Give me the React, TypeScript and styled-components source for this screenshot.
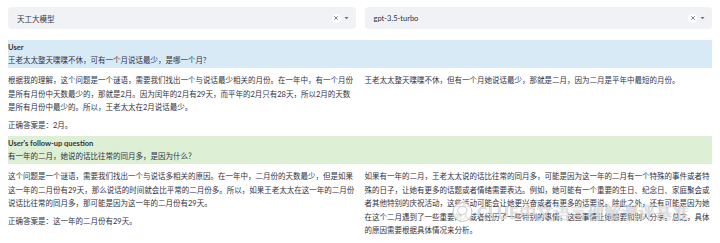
import styled, { createGlobalStyle } from "styled-components";
import { X } from "lucide-react";

const GlobalStyle = createGlobalStyle`
  * { box-sizing: border-box; }
  body {
    margin: 0;
    background: #ffffff;
    color: #31333f;
    font-family: Lato, "Noto Sans CJK SC", sans-serif;
  }
`;

interface Round {
  title: string;
  tone: "user" | "followup";
  question: string;
  answers: string[][];
}

const models = ["天工大模型", "gpt-3.5-turbo"];

const rounds: Round[] = [
  {
    title: "User",
    tone: "user",
    question: "王老太太整天喋喋不休，可有一个月说话最少，是哪一个月?",
    answers: [
      [
        "根据我的理解，这个问题是一个谜语，需要我们找出一个与说话最少相关的月份。在一年中，有一个月份是所有月份中天数最少的，那就是2月。因为闰年的2月有29天，而平年的2月只有28天，所以2月的天数是所有月份中最少的。所以，王老太太在2月说话最少。",
        "正确答案是：2月。",
      ],
      ["王老太太整天喋喋不休，但有一个月她说话最少，那就是二月，因为二月是平年中最短的月份。"],
    ],
  },
  {
    title: "User's follow-up question",
    tone: "followup",
    question: "有一年的二月，她说的话比往常的同月多，是因为什么？",
    answers: [
      [
        "这个问题是一个谜语，需要我们找出一个与说话多相关的原因。在一年中，二月份的天数最少，但是如果这一年的二月份有29天，那么说话的时间就会比平常的二月份多。所以，如果王老太太在这一年的二月份说话比往常的同月多，那可能是因为这一年的二月份有29天。",
        "正确答案是：这一年的二月份有29天。",
      ],
      [
        "如果有一年的二月，王老太太说的话比往常的同月多，可能是因为这一年的二月有一个特殊的事件或者特殊的日子，让她有更多的话题或者情绪需要表达。例如，她可能有一个重要的生日、纪念日、家庭聚会或者其他特别的庆祝活动，这些活动可能会让她更兴奋或者有更多的话要说。除此之外，还有可能是因为她在这个二月遇到了一些重要的人或者经历了一些特别的事情，这些事情让她想要和别人分享。总之，具体的原因需要根据具体情况来分析。",
      ],
    ],
  },
];

const App: React.FC = () => {
  return (
    <Page>
      <GlobalStyle />
      <SelectRow>
        {models.map((model) => (
          <Select key={model}>
            <span>{model}</span>
            <SelectControls>
              <ClearButton>
                <X size={6} strokeWidth={2.5} />
              </ClearButton>
              <svg width="5" height="4" viewBox="0 0 5 4">
                <path d="M0.5 1 L4.5 1 L2.5 3.2 Z" fill="#6b6d7a" />
              </svg>
            </SelectControls>
          </Select>
        ))}
      </SelectRow>
      {rounds.map((round) => (
        <Section key={round.title}>
          <Banner tone={round.tone}>
            <BannerTitle>{round.title}</BannerTitle>
            <BannerText>{round.question}</BannerText>
          </Banner>
          <Columns>
            {round.answers.map((paragraphs, index) => (
              <Answer key={index}>
                {paragraphs.map((text) => (
                  <p key={text}>{text}</p>
                ))}
              </Answer>
            ))}
          </Columns>
        </Section>
      ))}
      <Watermark>
        <svg width="21" height="22" viewBox="0 0 21 22">
          <circle cx="10.5" cy="11" r="9.5" fill="rgba(255,255,255,0.75)" stroke="#c4c4c4" strokeWidth="1" />
          <path
            d="M5.5 9.5 C5.5 7 7.8 5.5 10.2 5.5 C12.8 5.5 15 7 15 9.5 C15 12 12.8 13.5 10.2 13.5 L8.2 15 L8.6 13.2 C6.8 12.6 5.5 11.2 5.5 9.5 Z"
            fill="none"
            stroke="#c4c4c4"
            strokeWidth="0.9"
          />
        </svg>
        <span>CLUE中文语言理解测评基准</span>
      </Watermark>
    </Page>
  );
};

const Page = styled.div`
  position: relative;
  width: 720px;
  height: 243px;
  padding: 7px 8px 0;
  overflow: hidden;
`;

const Columns = styled.div`
  display: grid;
  grid-template-columns: 1fr 1fr;
  column-gap: 9px;
`;

const SelectRow = styled(Columns)`
  margin-bottom: 11px;
`;

const Select = styled.div`
  height: 22px;
  display: flex;
  align-items: center;
  justify-content: space-between;
  padding: 0 7px 0 9px;
  background: #f0f2f6;
  border-radius: 4px;
  font-size: 7.5px;
  color: #31333f;
`;

const SelectControls = styled.div`
  display: flex;
  align-items: center;
  gap: 3px;
`;

const ClearButton = styled.div`
  width: 9px;
  height: 9px;
  border-radius: 50%;
  background: #ffffff;
  display: flex;
  align-items: center;
  justify-content: center;
  color: #31333f;
`;

const Section = styled.section`
  & + & {
    margin-top: 4px;
  }
`;

const Banner = styled.div<{ tone: "user" | "followup" }>`
  padding: 1px 0;
  margin-bottom: 6px;
  background: ${({ tone }) => (tone === "user" ? "#d9eaf7" : "#ddefd5")};
  font-size: 7.5px;
  line-height: 13px;
`;

const BannerTitle = styled.div`
  font-weight: 700;
`;

const BannerText = styled.div`
  font-weight: 400;
`;

const Answer = styled.div`
  font-size: 7.5px;
  line-height: 13.5px;
  > p {
    margin: 0 0 4px;
  }
  > p:last-child {
    margin-bottom: 0;
  }
`;

const Watermark = styled.div`
  position: absolute;
  left: 452px;
  top: 201px;
  display: flex;
  align-items: center;
  gap: 4px;
  pointer-events: none;
  > span {
    font-family: "Noto Sans CJK SC", sans-serif;
    font-size: 16.5px;
    line-height: 22px;
    color: rgba(255, 255, 255, 0.72);
    text-shadow: 0 0 1px rgba(0, 0, 0, 0.45);
    letter-spacing: 0.5px;
  }
`;

export default App;
